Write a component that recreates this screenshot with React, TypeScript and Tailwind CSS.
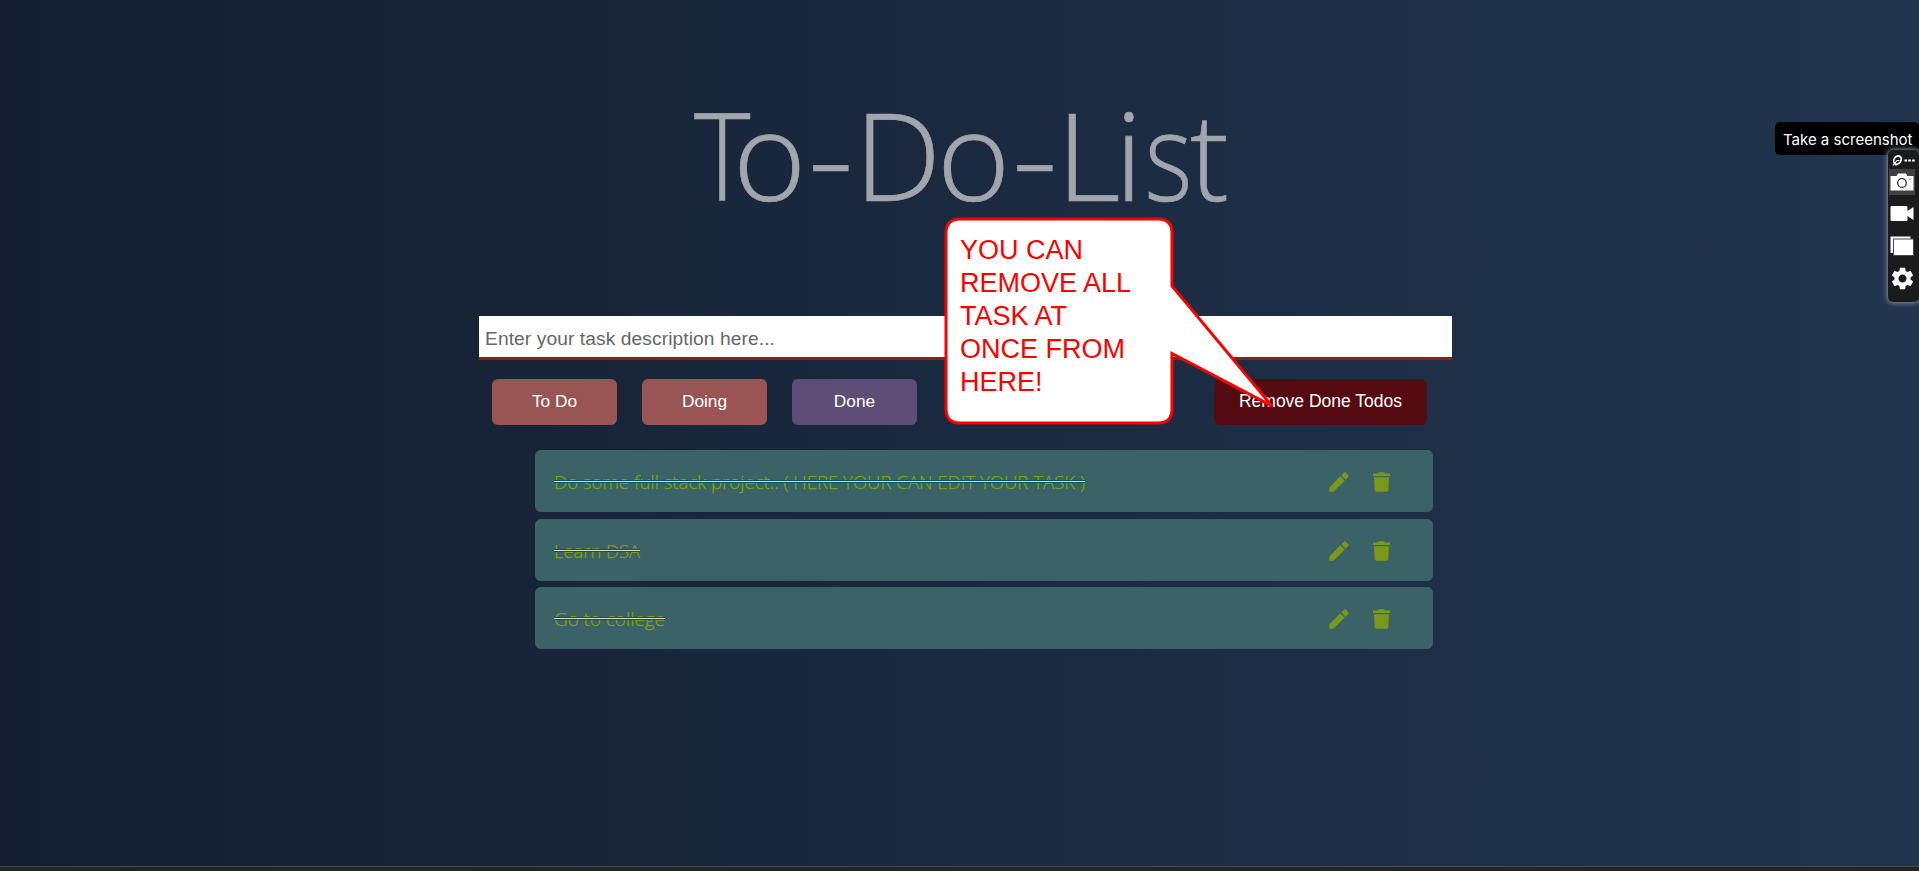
import { MdSettings } from "react-icons/md";

const todos = [
  { text: "Do some full stack project.. ( HERE YOUR CAN EDIT YOUR TASK )", width: 531 },
  { text: "Learn DSA", width: 86 },
  { text: "Go to college", width: 111 },
];

const titleGlyphs = [
  { char: "T", x: 14, stretch: 0.88 },
  { char: "o", x: 53, stretch: 1.02 },
  { char: "-", x: 128, stretch: 1.16 },
  { char: "D", x: 174.5, stretch: 1 },
  { char: "o", x: 257, stretch: 1.02 },
  { char: "-", x: 332, stretch: 1.16 },
  { char: "L", x: 376.5, stretch: 1.02 },
  { char: "i", x: 435, stretch: 1 },
  { char: "s", x: 464.5, stretch: 0.84 },
  { char: "t", x: 510, stretch: 0.95 },
];

const statusButton =
  "flex h-[46px] w-[125px] items-center justify-center rounded-[6px] pb-px text-[17.3px]";

function PencilIcon() {
  return (
    <svg width="20" height="20" viewBox="0 0 20 20" fill="currentColor">
      <path d="M.3 19.700V15.600L11.300 4.300L15.700 8.700L4.400 19.700Z" />
      <path d="M12.300 3.300L14.700.9Q15.900-.2 17.100 1L19 2.900Q20.200 4.100 19 5.300L16.700 7.700Z" />
    </svg>
  );
}

function TrashIcon() {
  return (
    <svg width="17" height="20" viewBox="0 0 17 20" fill="currentColor">
      <path d="M0 1.500H5L5.700.2H11.300L12 1.500H17V4H0Z" />
      <path d="M1 5.300H16L15.300 18Q15.200 19.700 13.500 19.700H3.500Q1.800 19.700 1.700 18Z" />
    </svg>
  );
}

function Callout() {
  return (
    <div className="absolute left-[944px] top-[216px] h-[210px] w-[332px]">
      <svg className="absolute inset-0" width="332" height="210" viewBox="0 0 332 210">
        <path
          d="M16 3H214Q228 3 228 17V70L328 190L228 137.500V193Q228 207 214 207H16Q2 207 2 193V17Q2 3 16 3Z"
          fill="#fff"
          stroke="#fb0000"
          strokeWidth="3"
          strokeLinejoin="miter"
        />
      </svg>
      <p className="relative ml-[16px] w-[190px] pt-[18px] text-[27px] leading-[33px] text-[#fb0000]">
        YOU CAN
        <br />
        REMOVE ALL
        <br />
        TASK AT
        <br />
        ONCE FROM
        <br />
        HERE!
      </p>
    </div>
  );
}

function Toolbar() {
  return (
    <aside className="absolute right-0 top-[122px] flex flex-col items-end">
      <div className="flex h-[33px] w-[144px] items-center rounded-[5px] bg-black pl-[8px] pt-[3px] font-[Inter] text-[15px] text-white">
        <span className="whitespace-nowrap">Take a screenshot</span>
      </div>
      <div className="-mt-[5px] flex h-[152px] w-[31px] flex-col items-center rounded-[5px] bg-[#1b1b1b] pr-[3px] pt-[3px] text-white shadow-[0_0_5px_1px_#8a939d]">
        <svg width="26" height="16" viewBox="0 0 26 16" fill="none" stroke="#fff" className="shrink-0">
          <ellipse cx="8.500" cy="7" rx="3.400" ry="4.400" transform="rotate(35 8.500 7)" strokeWidth="1.700" />
          <path d="M4 12.500l4-5h2.500M10 3l3 3M4.500 9l3 3.500" strokeWidth="1.200" />
          <path d="M15.500 7.500h11" strokeWidth="2" strokeDasharray="2.600 1.200" />
        </svg>
        <div className="flex h-[26px] w-[26px] shrink-0 items-center justify-center bg-[#404040]">
          <svg width="24" height="18" viewBox="0 0 24 18">
            <path d="M0.500 3h6L8 0.500h8L17.500 3H23.500V17.500H0.500Z" fill="#fff" />
            <circle cx="12" cy="10" r="4.300" fill="#fff" stroke="#333" strokeWidth="1.300" />
            <path d="M19.500 6h1" stroke="#333" />
          </svg>
        </div>
        <svg className="mt-[11px] shrink-0" width="24" height="15" viewBox="0 0 24 15" fill="#fff">
          <path d="M1.500 0h14.500q1.500 0 1.500 1.500v3.500l6-4v13l-6-4v3.500q0 1.500-1.500 1.500H1.500Q.5 15 .5 13.500V1.500Q.5 0 1.500 0Z" />
        </svg>
        <svg className="mt-[15px] shrink-0" width="24" height="20" viewBox="0 0 24 20">
          <path d="M.5.500H20.500V17H.500Z" fill="#fff" />
          <path d="M3.500 3H23.500V19.500H3.500Z" fill="#fff" stroke="#444" strokeWidth="1" />
        </svg>
        <MdSettings className="mt-[9px] size-[27px] shrink-0" />
      </div>
    </aside>
  );
}

export default function App() {
  return (
    <div className="relative flex h-[871px] w-full flex-col overflow-hidden bg-linear-to-r from-[#141e30] to-[#21354f] font-['Liberation_Sans',Arial,sans-serif]">
      <main className="flex grow flex-col">
        <header className="flex h-[316px] justify-center pt-[50px]">
          <svg
            width="560"
            height="200"
            viewBox="0 -20 560 200"
            fill="#a1a5ac"
            stroke="#a1a5ac"
            strokeWidth="0.700"
            className="shrink-0 overflow-visible font-['Open_Sans',sans-serif] text-[122.5px] font-light"
          >
            {titleGlyphs.map((glyph) => (
              <text key={glyph.x} transform={`translate(${glyph.x} 131) scale(${glyph.stretch} 1)`}>
                {glyph.char}
              </text>
            ))}
          </svg>
        </header>
        <form className="ml-[479px] w-[973px]">
          <input
            className="block h-[44px] w-full border-b-[3px] border-[#8f2017] bg-white pl-[6px] pt-[4px] text-[19.2px] tracking-[0.09px] outline-none placeholder:text-[#666]"
            placeholder="Enter your task description here..."
          />
        </form>
        <nav className="ml-[492px] mt-[19px] flex w-[935px] gap-[25px] text-white">
          <button className={`${statusButton} bg-[#985553]`}>To Do</button>
          <button className={`${statusButton} bg-[#985553]`}>Doing</button>
          <button className={`${statusButton} bg-[#5d4d77]`}>Done</button>
          <button className="ml-auto flex h-[46px] w-[213px] items-center justify-center rounded-[6px] bg-[#560b12] pb-px text-[17.5px]">
            Remove Done Todos
          </button>
        </nav>
        <ul className="ml-[535px] mt-[25px] flex w-[898px] flex-col gap-[6.6px]">
          {todos.map((todo) => (
            <li
              key={todo.text}
              className="flex h-[62px] items-center rounded-[6px] bg-[#3b6267] pl-[19px] pr-[43px] pt-[2px] text-[#7a981c]"
            >
              <div className="relative mr-auto">
                <svg width={todo.width} height="28" className="block overflow-visible">
                  <text
                    x="0"
                    y="21"
                    textLength={todo.width}
                    lengthAdjust="spacingAndGlyphs"
                    fill="#84a600"
                    stroke="#84a600"
                    strokeWidth="0.250"
                    className="font-['Open_Sans',sans-serif] text-[19px] font-light"
                  >
                    {todo.text}
                  </text>
                </svg>
                <span className="absolute inset-x-0 top-[12px] h-[3px] border-y border-[#07505c] bg-[#d5dfdf]" />
              </div>
              <PencilIcon />
              <span className="w-[24px]" />
              <TrashIcon />
            </li>
          ))}
        </ul>
      </main>
      <footer className="h-[5px] shrink-0 border-t border-[#4b4b4b] bg-[#222425]" />
      <Callout />
      <Toolbar />
    </div>
  );
}
